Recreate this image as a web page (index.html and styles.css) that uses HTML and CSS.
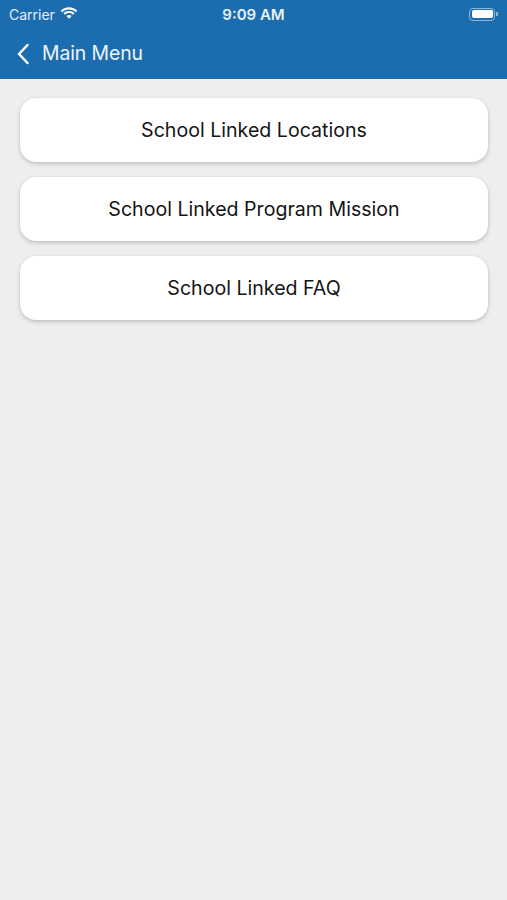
FILE: index.html
```html
<!DOCTYPE html>
<html>
<head>
<meta charset="utf-8">
<link rel="stylesheet" href="styles.css">
</head>
<body>
<header class="header">
  <div class="status">
    <div class="status-left">
      <span class="carrier">Carrier</span>
      <svg class="wifi" width="18" height="13" viewBox="0 0 17 12">
        <path d="M8.5 2.2c2.5 0 4.8 1 6.5 2.6l1.3-1.4C14.3 1.4 11.5.2 8.5.2S2.7 1.4.7 3.4L2 4.8c1.7-1.6 4-2.6 6.5-2.6z" fill="#fff"/>
        <path d="M8.5 5.6c1.5 0 2.9.6 3.9 1.5l1.3-1.4C12.4 4.5 10.5 3.7 8.5 3.7s-3.9.8-5.2 2l1.3 1.4c1-.9 2.4-1.5 3.9-1.5z" fill="#fff"/>
        <path d="M8.5 7.3c-1 0-1.8.4-2.5 1l2.5 2.7L11 8.3c-.7-.6-1.5-1-2.5-1z" fill="#fff"/>
      </svg>
    </div>
    <span class="time">9:09 AM</span>
    <div class="status-right">
      <div class="battery"><div class="battery-fill"></div></div>
      <div class="battery-cap"></div>
    </div>
  </div>
  <nav class="nav">
    <svg class="chev" width="14" height="22" viewBox="0 0 14 22">
      <path d="M11.5 2 L3 11 L11.5 20" fill="none" stroke="#fff" stroke-width="2.5" stroke-linecap="round" stroke-linejoin="round"/>
    </svg>
    <span class="nav-title">Main Menu</span>
  </nav>
</header>
<main class="list">
  <div class="card">School Linked Locations</div>
  <div class="card">School Linked Program Mission</div>
  <div class="card">School Linked FAQ</div>
</main>
</body>
</html>
```
FILE: styles.css
```css
html, body {
  margin: 0;
  padding: 0;
}
body {
  background: #eeeeee;
  font-family: "Inter", "Liberation Sans", sans-serif;
  width: 507px;
  height: 900px;
  overflow: hidden;
}
.header {
  background: #1b6db0;
  height: 79px;
  color: #fff;
}
.status {
  height: 28px;
  display: flex;
  align-items: center;
  justify-content: space-between;
  padding: 0 9px 0 9px;
  position: relative;
}
.status-left {
  display: flex;
  align-items: center;
  gap: 5px;
  padding-top: 1px;
}
.carrier {
  font-size: 14px;
  color: #e6eef7;
}
.wifi {
  margin-top: -3px;
}
.time {
  position: absolute;
  left: 0;
  right: 0;
  text-align: center;
  font-size: 15px;
  font-weight: 600;
  color: #e8f0f8;
  pointer-events: none;
}
.status-right {
  display: flex;
  align-items: center;
  gap: 1px;
}
.battery {
  width: 21px;
  height: 8px;
  border: 1.5px solid #8fb6d9;
  border-radius: 4px;
  padding: 1.5px;
  box-sizing: content-box;
}
.battery-fill {
  width: 100%;
  height: 100%;
  background: #fff;
  border-radius: 2px;
}
.battery-cap {
  width: 2px;
  height: 4px;
  background: #8fb6d9;
  border-radius: 0 1px 1px 0;
}
.nav {
  height: 51px;
  display: flex;
  align-items: center;
  padding-left: 16px;
  gap: 12px;
  padding-bottom: 1px;
  box-sizing: border-box;
}
.chev {
  margin-top: 1px;
}
.nav-title {
  font-size: 19.4px;
  color: #eef4fa;
  letter-spacing: -0.1px;
}
.list {
  display: flex;
  flex-direction: column;
  gap: 15px;
  padding: 19px 19px 0 20px;
}
.card {
  background: #fff;
  height: 64px;
  border-radius: 16px;
  box-shadow: 0 2px 4px rgba(0,0,0,0.18), 0 0 2px rgba(0,0,0,0.08);
  display: flex;
  align-items: center;
  justify-content: center;
  font-size: 19.6px;
  color: #151515;
}
```
